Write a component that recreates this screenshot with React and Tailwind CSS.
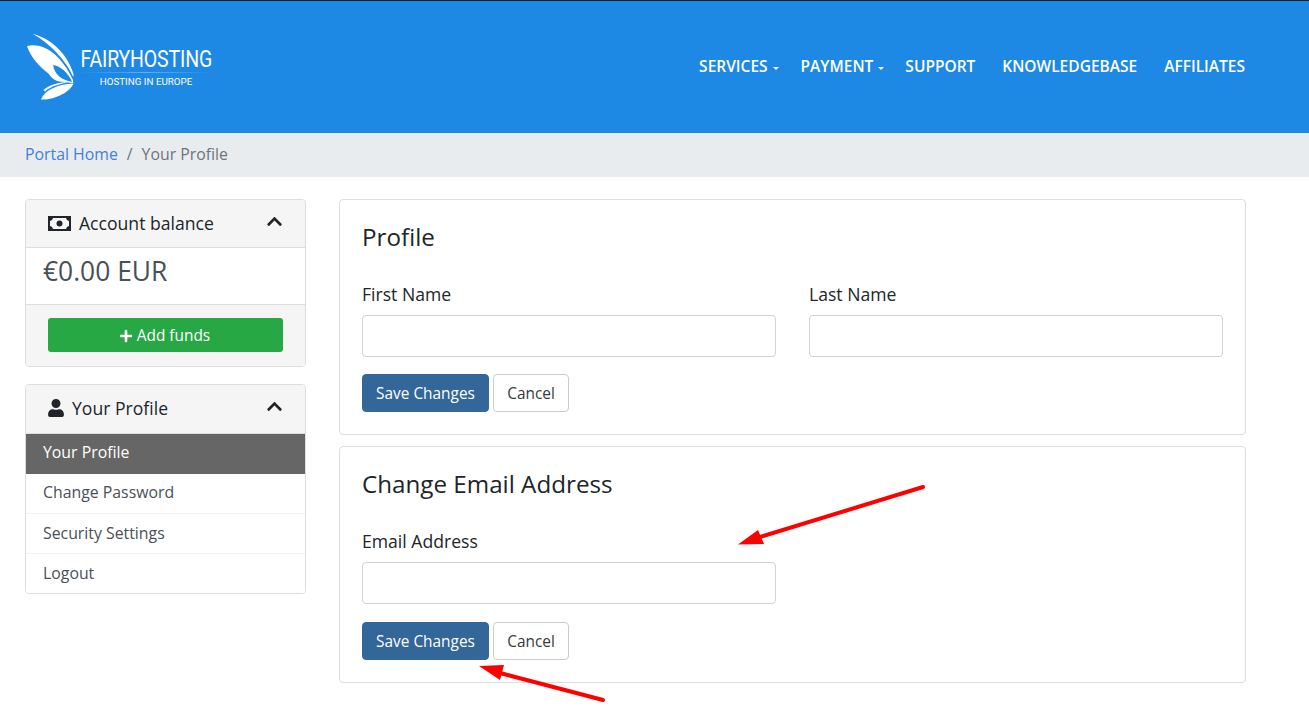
import React from "react";
import { FaUser, FaPlus, FaChevronUp } from "react-icons/fa";

const Logo = () => (
  <svg width="47" height="67" viewBox="0 0 47 67" className="shrink-0">
    <path fill="#fff" d="M6 0 C22 4 40 18 46.500 40 C46.500 41 46.500 42 46.200 43 C40 28 24 10 6 0Z" />
    <path fill="#fff" d="M0 12 C16 8 34 20 46 46 L46 49 C36 47 28 50 22 40 C12 32 4 24 0 12Z" />
    <path fill="#1e88e5" stroke="#fff" strokeWidth="1" d="M25.500 30.500 C33 31 41 38 46 48.500 C36 47 27 42 25.500 30.500Z" />
    <path fill="#fff" d="M16.500 56 C22 51 31 48 43 48 C33 50 24 52 18 57.500Z" />
    <path fill="#fff" d="M14 65.500 C17 57 30 50 46.500 49.500 C43 58 28 66 14 65.500Z" />
  </svg>
);

const MoneyIcon = () => (
  <svg width="23" height="15" viewBox="0 0 23 15" className="shrink-0">
    <rect x="1" y="1" width="21" height="13" fill="#f5f5f5" stroke="#212529" strokeWidth="2" />
    <path fill="#212529" d="M1 1h4a4 4 0 0 1-4 4z M22 1h-4a4 4 0 0 0 4 4z M1 14h4a4 4 0 0 0-4-4z M22 14h-4a4 4 0 0 1 4-4z" />
    <circle cx="11.500" cy="7.500" r="3" fill="#212529" />
  </svg>
);

const Arrow = ({ x1, y1, x2, y2, tipx, tipy, b1, b2 }) => (
  <>
    <line x1={x1} y1={y1} x2={x2} y2={y2} stroke="#ff0000" strokeWidth="4" strokeLinecap="round" />
    <polygon fill="#ff0000" points={`${tipx},${tipy} ${b1} ${b2}`} />
  </>
);

const Input = () => (
  <div className="h-[42px] bg-white border border-[#ced4da] rounded-[4px]" />
);

const Buttons = () => (
  <div className="flex gap-1">
    <button className="h-[38px] w-[127px] bg-[#336699] text-white text-[15.400px] rounded-[4px] border border-[#336699] pt-px">Save Changes</button>
    <button className="h-[38px] w-[76px] bg-white text-[#343a40] text-[15.400px] rounded-[4px] border border-[#ccc] pt-px">Cancel</button>
  </div>
);

const NavItem = ({ label, caret, className = "" }) => (
  <a className={`flex items-center text-white text-[15.500px] font-semibold whitespace-nowrap ${className}`}>
    {label}
    {caret && <span className="ml-[5px] mt-[2px] w-0 h-0 border-x-[3px] border-x-transparent border-t-[3px] border-t-white" />}
  </a>
);

const SideHead = ({ icon, title, gap, h }) => (
  <div className={`flex items-center justify-between bg-[#f5f5f5] border-b border-[#ddd] pl-[22px] pr-[22px] ${h}`}>
    <div className={`flex items-center text-[#212529] text-[17.600px] ${gap}`}>
      {icon}
      <span>{title}</span>
    </div>
    <FaChevronUp className="text-[#212529] w-[17px] h-[17px] -mt-[4px]" />
  </div>
);

export default function App() {
  return (
    <div className="relative w-[1309px] h-[713px] overflow-hidden bg-white font-['Open_Sans',sans-serif] text-[#212529]">
      <div className="h-px bg-[#1b1f24]" />
      <header className="h-[132px] bg-[#1e88e5] flex items-center justify-between pl-[27px] pr-[64px]">
        <div className="flex items-center gap-[6px]">
          <Logo />
          <div className="flex flex-col items-center mt-[2px] w-[132px]">
            <span className="text-white text-[23.500px] leading-[24px] font-['Roboto',sans-serif] tracking-[-0.200px] [transform:scaleX(0.83)] whitespace-nowrap">FAIRYHOSTING</span>
            <span className="w-full h-px mt-[1px] bg-gradient-to-r from-transparent via-[#63b0f3] to-transparent" />
            <span className="text-white text-[9.800px] leading-[14px] mt-[2px] font-['Roboto',sans-serif] whitespace-nowrap">HOSTING IN EUROPE</span>
          </div>
        </div>
        <nav className="flex items-center">
          <NavItem label="SERVICES" caret />
          <NavItem label="PAYMENT" caret className="ml-[22px]" />
          <NavItem label="SUPPORT" className="ml-[21px]" />
          <NavItem label="KNOWLEDGEBASE" className="ml-[27px]" />
          <NavItem label="AFFILIATES" className="ml-[27px]" />
        </nav>
      </header>
      <div className="h-[44px] bg-[#e9ecef] flex items-center pl-[25px] pb-[1px] text-[15.840px]">
        <a className="text-[#3f80d9]">Portal Home</a>
        <span className="text-[#6c757d] mx-[9px]">/</span>
        <span className="text-[#6c757d]">Your Profile</span>
      </div>
      <div className="flex items-start pl-[25px] pt-[22px]">
        <aside className="w-[281px] flex flex-col gap-[17px] shrink-0">
          <div className="border border-[#ddd] rounded-[4px] overflow-hidden">
            <SideHead h="h-[48px]" gap="gap-[8px]" title="Account balance" icon={<MoneyIcon />} />
            <div className="h-[57px] bg-white border-b border-[#ddd] pl-[17px] pt-[5px] text-[26.400px] leading-[36px] text-[#495057]">€0.00 EUR</div>
            <div className="h-[61px] bg-[#f5f5f5] flex items-center px-[22px] pb-px">
              <button className="w-full h-[34px] rounded-[3px] bg-[#28a745] text-white text-[15.400px] flex items-center justify-center gap-[4px] pr-[2px] pt-px">
                <FaPlus className="w-[14px] h-[14px]" />
                <span>Add funds</span>
              </button>
            </div>
          </div>
          <div className="border border-[#ddd] rounded-[4px] overflow-hidden">
            <SideHead h="h-[49px] pb-[2px]" gap="gap-[8px]" title="Your Profile" icon={<FaUser className="w-[16px] h-[18px] text-[#212529]" />} />
            <div className="h-[40px] bg-[#666666] text-white text-[15.840px] flex items-center pl-[17px] pb-[3px]">Your Profile</div>
            <div className="h-[40px] bg-white border-b border-[#f2f2f2] text-[#495057] text-[15.840px] flex items-center pl-[17px] pb-[1px]">Change Password</div>
            <div className="h-[40px] bg-white border-b border-[#f2f2f2] text-[#495057] text-[15.840px] flex items-center pl-[17px]">Security Settings</div>
            <div className="h-[39px] bg-white text-[#495057] text-[15.840px] flex items-center pl-[17px]">Logout</div>
          </div>
        </aside>
        <main className="ml-[33px] w-[907px] flex flex-col gap-[11px]">
          <section className="h-[236px] border border-[#ddd] rounded-[4px] px-[22px] pt-[19px]">
            <h2 className="text-[24.200px] leading-[36px] text-[#212529]">Profile</h2>
            <div className="grid grid-cols-2 gap-[33px] mt-[27px]">
              <div>
                <label className="block text-[17.600px] leading-[24px] mb-[9px]">First Name</label>
                <Input />
              </div>
              <div>
                <label className="block text-[17.600px] leading-[24px] mb-[9px]">Last Name</label>
                <Input />
              </div>
            </div>
            <div className="mt-[17px]"><Buttons /></div>
          </section>
          <section className="h-[237px] border border-[#ddd] rounded-[4px] px-[22px] pt-[19px]">
            <h2 className="text-[24.200px] leading-[36px] text-[#212529]">Change Email Address</h2>
            <div className="grid grid-cols-2 gap-[33px] mt-[27px]">
              <div>
                <label className="block text-[17.600px] leading-[24px] mb-[9px]">Email Address</label>
                <Input />
              </div>
            </div>
            <div className="mt-[18px]"><Buttons /></div>
          </section>
        </main>
      </div>
      <svg className="absolute left-0 top-0 pointer-events-none" width="1309" height="713">
        <Arrow x1={923} y1={487} x2={760} y2={537} tipx={738} tipy={544.500} b1="758,530" b2="764,544" />
        <Arrow x1={603} y1={700} x2={500} y2={673} tipx={479} tipy={666} b1="504,665" b2="500,680" />
      </svg>
    </div>
  );
}
